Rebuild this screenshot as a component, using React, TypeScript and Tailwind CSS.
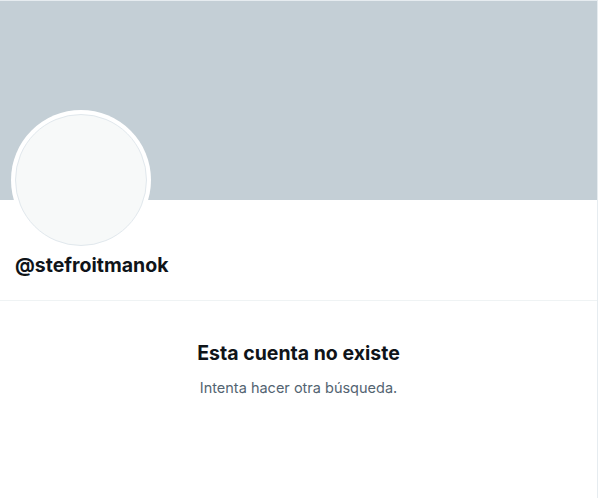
import React from 'react';

export default function App() {
  return (
    <div className="w-[598px] h-[498px] bg-white border-t border-r border-[#e6ecf0] font-['Inter','Liberation_Sans',sans-serif] overflow-hidden">
      {/* Banner */}
      <div className="h-[199px] bg-[#c4cfd6]" />

      {/* Profile header */}
      <div className="px-[11px] pb-[23px] border-b border-[#eff3f4]">
        <div className="-mt-[90px] w-[140px] h-[140px] rounded-full bg-white p-[4px]">
          <div className="w-full h-full rounded-full bg-[#f7f9f9] border border-[#e1e8ed]" />
        </div>
        <div className="mt-[3px] pl-[4px] text-[19.5px] leading-[24px] font-bold text-[#0f1419]">
          @stefroitmanok
        </div>
      </div>

      {/* Empty state */}
      <div className="flex flex-col items-center pt-[40px]">
        <h2 className="text-[19.5px] leading-[24px] font-bold text-[#0f1419]">Esta cuenta no existe</h2>
        <p className="mt-[13px] text-[14.5px] leading-[20px] text-[#536471]">Intenta hacer otra búsqueda.</p>
      </div>
    </div>
  );
}
